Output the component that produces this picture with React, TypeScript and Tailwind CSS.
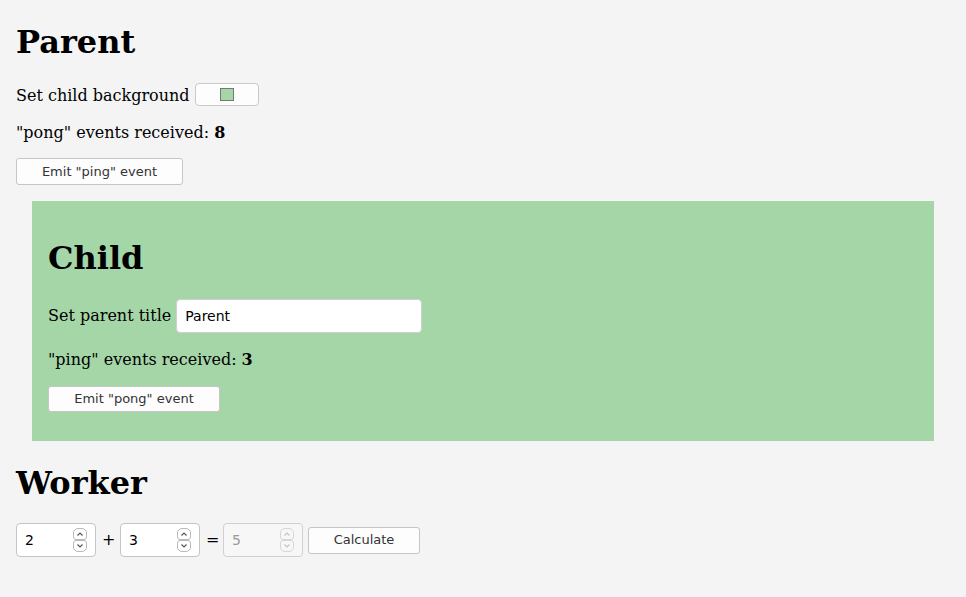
import React from "react";

const serif = "font-['DejaVu_Serif',serif]";
const sans = "font-['DejaVu_Sans',sans-serif]";

const Spinner: React.FC<{ disabled?: boolean }> = ({ disabled }) => {
  const stroke = disabled ? "#c4c4c4" : "#555";
  const border = disabled ? "border-[#d6d6d6]" : "border-[#b8b8b8]";
  return (
    <div className="flex flex-col">
      <div className={`w-[14px] h-[12px] border ${border} rounded-t-[5px] rounded-b-[3px] flex items-center justify-center`}>
        <svg width="8" height="6" viewBox="0 0 8 6">
          <path d="M1.5 4.5 L4 2 L6.5 4.5" fill="none" stroke={stroke} strokeWidth="1.2" />
        </svg>
      </div>
      <div className={`w-[14px] h-[12px] border ${border} rounded-b-[5px] rounded-t-[3px] flex items-center justify-center`}>
        <svg width="8" height="6" viewBox="0 0 8 6">
          <path d="M1.5 1.5 L4 4 L6.5 1.5" fill="none" stroke={stroke} strokeWidth="1.2" />
        </svg>
      </div>
    </div>
  );
};

const NumberField: React.FC<{ value: string; disabled?: boolean }> = ({ value, disabled }) => (
  <div
    className={`w-[80px] h-[34px] rounded-[4px] border flex items-center justify-between pl-[8px] pr-[8px] ${
      disabled ? "border-[#d0d0d0] bg-[#f7f7f7] text-[#9a9a9a]" : "border-[#c4c4c4] bg-white text-black"
    } ${sans} text-[14px]`}
  >
    <span>{value}</span>
    <Spinner disabled={disabled} />
  </div>
);

const Button: React.FC<{ label: string; width: string; height: string }> = ({ label, width, height }) => (
  <button
    className={`${width} ${height} bg-[#fdfdfd] border border-[#c6c6c6] rounded-[3px] text-[#333] ${sans} text-[13px] flex items-center justify-center`}
  >
    {label}
  </button>
);

export default function App() {
  return (
    <div className={`min-h-[597px] bg-[#f4f4f4] px-4 text-black ${serif} text-[16px]`}>
      <div className="pt-[24px]" />
      <h1 className="h-[37px] leading-[37px] text-[32px] font-bold">Parent</h1>
      <div className="mt-[22px] h-[23px] flex items-center gap-[5px]">
        <span className="pt-[2px]">Set child background</span>
        <div className="w-[64px] h-[23px] bg-[#fdfdfd] border border-[#c9c9c9] rounded-[4px] flex items-center justify-center">
          <div className="w-[14px] h-[13px] bg-[#a5d6a7] border border-[#777]" />
        </div>
      </div>
      <p className="mt-[17px] h-[19px] leading-[19px]">
        "pong" events received: <b>8</b>
      </p>
      <div className="mt-[16px]">
        <Button label={'Emit "ping" event'} width="w-[167px]" height="h-[27px]" />
      </div>

      <div className="mt-[16px] mx-4 bg-[#a5d6a7] px-4 pt-4 pb-[29px]">
        <div className="pt-[23px]" />
        <h1 className="h-[37px] leading-[37px] text-[32px] font-bold">Child</h1>
        <div className="mt-[22px] h-[34px] flex items-center gap-[5px]">
          <span>Set parent title</span>
          <div className={`w-[246px] h-[34px] bg-white border border-[#cfcfcf] rounded-[4px] flex items-center pl-[8px] ${sans} text-[14px]`}>
            Parent
          </div>
        </div>
        <p className="mt-[17px] h-[19px] leading-[19px]">
          "ping" events received: <b>3</b>
        </p>
        <div className="mt-[17px]">
          <Button label={'Emit "pong" event'} width="w-[172px]" height="h-[26px]" />
        </div>
      </div>

      <h1 className="mt-[24px] h-[37px] leading-[37px] text-[32px] font-bold">Worker</h1>
      <div className={`mt-[21px] h-[34px] flex items-center gap-[6px] ${sans}`}>
        <NumberField value="2" />
        <span className="w-[12px] text-center text-[16px]">+</span>
        <NumberField value="3" />
        <span className="w-[12px] mr-[-1px] text-center text-[16px]">=</span>
        <NumberField value="5" disabled />
        <div className="ml-[-1px]">
          <Button label="Calculate" width="w-[112px]" height="h-[27px]" />
        </div>
      </div>
    </div>
  );
}
